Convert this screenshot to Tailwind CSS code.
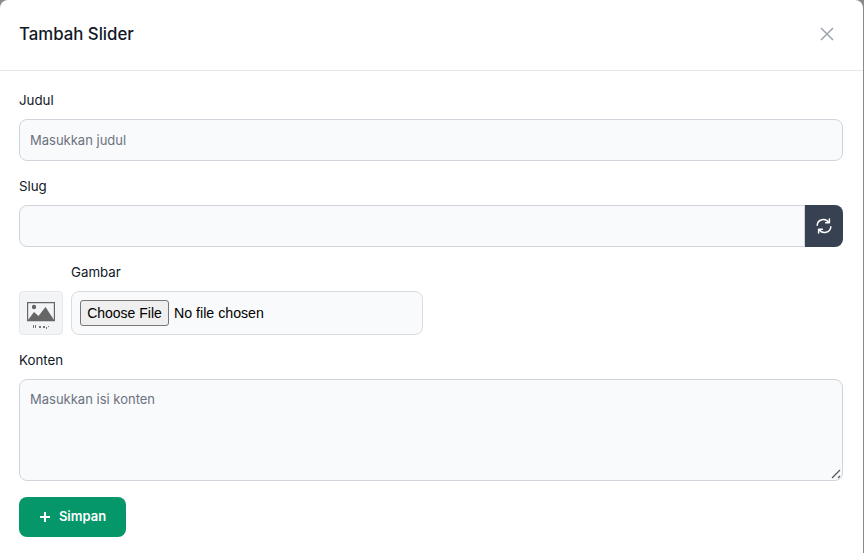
<!DOCTYPE html>
<html lang="id">
<head>
  <meta charset="UTF-8">
  <title>Tambah Slider</title>
  <script src="https://cdn.jsdelivr.net/npm/@tailwindcss/browser@4"></script>
</head>
<body class="bg-[#8a8a8a] h-[553px] overflow-hidden font-['Inter',sans-serif]">
  <div class="bg-white w-[863px] h-[553px] rounded-t-lg">
    <!-- header -->
    <div class="h-[71px] px-[19px] flex items-center justify-between border-b border-[#e5e7eb]">
      <h3 class="text-[16.8px] font-medium text-[#111827]">Tambah Slider</h3>
      <button class="mr-[9px] mb-[2px] text-[#9ca3af]">
        <svg class="w-4 h-4" fill="none" stroke="currentColor" viewBox="0 0 16 16"><path stroke-width="1.5" d="M2 2l12 12M14 2L2 14"></path></svg>
      </button>
    </div>
    <form class="px-[19px] pt-[20px]">
      <label class="block text-[13.3px] leading-[18px] font-normal text-[#111827] mb-[10px]">Judul</label>
      <input type="text" placeholder="Masukkan judul" class="w-[824px] h-[42px] px-[10px] bg-[#f9fafb] border border-[#d1d5db] rounded-lg text-[13px] placeholder:text-[#6b7280]">

      <label class="block text-[13.3px] leading-[18px] font-normal text-[#111827] mt-[16px] mb-[10px]">Slug</label>
      <div class="flex w-[824px]">
        <input type="text" class="flex-1 h-[42px] px-[10px] bg-[#f9fafb] border border-[#d1d5db] rounded-l-lg text-[13px]">
        <button type="button" class="w-[38px] h-[42px] bg-[#374151] rounded-r-lg flex items-center justify-center text-white">
          <svg class="w-4 h-4" fill="none" stroke="currentColor" stroke-width="1.5" stroke-linecap="round" stroke-linejoin="round" viewBox="0 0 16 16"><path d="M1.2 7.2A6.2 6 0 0 1 12.8 4.6M13.4 1v3.8H9.6"></path><path d="M14.8 8.8A6.2 6 0 0 1 3.2 11.4M2.6 15v-3.8h3.8"></path></svg>
        </button>
      </div>

      <div class="flex gap-[8px] mt-[16px]">
        <div class="w-[44px] h-[44px] mt-[28px] bg-[#f3f4f6] border border-[#e5e7eb] rounded flex items-center justify-center">
          <svg class="w-[28px] h-[28px] mt-[6px]" viewBox="0 0 28 28"><path fill="none" stroke="#666" stroke-width="1.2" d="M.6 .6h26.8v18H.6z"></path><circle cx="7" cy="5" r="2.2" fill="#666"></circle><path fill="#666" d="M1 18l6-8 4.5 4 7-9 8.5 13z"></path><path fill="#777" d="M6 23h1v3H6zM8 23h1v3H8zM12 24h2v2h-2zM16 24h2v2h-2zM19 25h1v2h-1zM21 24h1v1h-1z"></path></svg>
        </div>
        <div>
          <label class="block text-[13.3px] leading-[18px] font-normal text-[#111827] mb-[10px]">Gambar</label>
          <div class="w-[352px] h-[44px] flex items-center pl-[8px] bg-[#f9fafb] border border-[#d9dce1] rounded-lg">
            <input type="file" class="w-[330px] text-[14.2px] font-['Liberation_Sans',sans-serif] text-black file:mr-[5px] file:w-[89px] file:px-0 file:h-[26px] file:text-[14px] file:border file:border-[#767676] file:rounded-[3px] file:bg-[#efefef]">
          </div>
        </div>
      </div>

      <label class="block text-[13.3px] leading-[18px] font-normal text-[#111827] mt-[16px] mb-[10px]">Konten</label>
      <div class="relative w-[824px]">
        <textarea placeholder="Masukkan isi konten" class="block w-[824px] h-[102px] px-[10px] py-[10px] resize-none bg-[#f9fafb] border border-[#d1d5db] rounded-lg text-[13px] placeholder:text-[#6b7280]"></textarea>
        <svg class="absolute right-[2px] bottom-[2px] w-[10px] h-[10px]" fill="none" stroke="#555" stroke-width="1.2" viewBox="0 0 10 10"><path d="M1 9l8-8M7 9l2-2"></path></svg>
      </div>

      <button type="button" class="mt-[16px] w-[107px] h-[40px] bg-[#059669] rounded-lg flex items-center justify-center gap-[8px] text-white text-[13px] font-semibold">
        <svg class="w-3 h-3" fill="none" stroke="currentColor" stroke-width="2" viewBox="0 0 12 12"><path d="M6 1v10M1 6h10"></path></svg>
        Simpan
      </button>
    </form>
  </div>
</body>
</html>
